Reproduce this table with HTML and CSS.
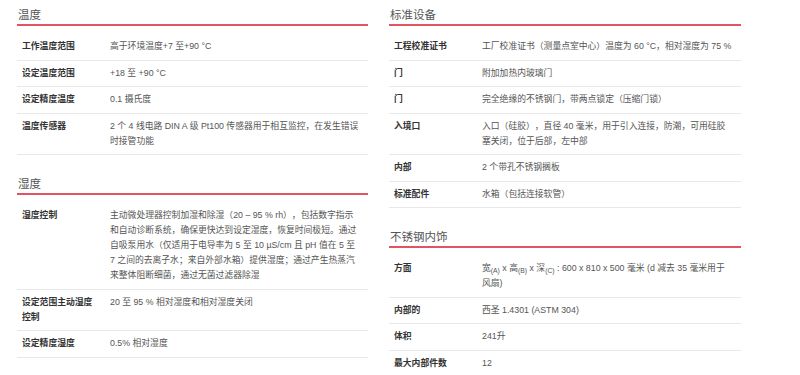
FILE: index.html
```html
<!DOCTYPE html>
<html lang="zh">
<head>
<meta charset="utf-8">
<link rel="stylesheet" href="styles.css">
</head>
<body>
<div class="page">
  <div class="col">
    <section class="spec">
      <h2 class="spec-title">温度</h2>
      <div class="rows">
        <div class="row"><div class="label">工作温度范围</div><div class="value">高于环境温度+7 至+90 °C</div></div>
        <div class="row"><div class="label">设定温度范围</div><div class="value">+18 至 +90 °C</div></div>
        <div class="row"><div class="label">设定精度温度</div><div class="value">0.1 摄氏度</div></div>
        <div class="row"><div class="label">温度传感器</div><div class="value">2 个 4 线电路 DIN A 级 Pt100 传感器用于相互监控，在发生错误<br>时接管功能</div></div>
      </div>
    </section>
    <section class="spec">
      <h2 class="spec-title">湿度</h2>
      <div class="rows">
        <div class="row"><div class="label">湿度控制</div><div class="value">主动微处理器控制加湿和除湿（20 – 95 % rh），包括数字指示<br>和自动诊断系统，确保更快达到设定湿度，恢复时间极短。通过<br>自吸泵用水（仅适用于电导率为 5 至 10 µS/cm 且 pH 值在 5 至<br>7 之间的去离子水；来自外部水箱）提供湿度；通过产生热蒸汽<br>来整体阻断细菌，通过无菌过滤器除湿</div></div>
        <div class="row"><div class="label">设定范围主动湿度控制</div><div class="value">20 至 95 % 相对湿度和相对湿度关闭</div></div>
        <div class="row"><div class="label">设定精度湿度</div><div class="value">0.5% 相对湿度</div></div>
      </div>
    </section>
  </div>
  <div class="col">
    <section class="spec">
      <h2 class="spec-title">标准设备</h2>
      <div class="rows">
        <div class="row"><div class="label">工程校准证书</div><div class="value">工厂校准证书（测量点室中心）温度为 60 °C，相对湿度为 75 %</div></div>
        <div class="row"><div class="label">门</div><div class="value">附加加热内玻璃门</div></div>
        <div class="row"><div class="label">门</div><div class="value">完全绝缘的不锈钢门，带两点锁定（压缩门锁）</div></div>
        <div class="row"><div class="label">入境口</div><div class="value">入口（硅胶），直径 40 毫米，用于引入连接，防潮，可用硅胶<br>塞关闭，位于后部，左中部</div></div>
        <div class="row"><div class="label">内部</div><div class="value">2 个带孔不锈钢搁板</div></div>
        <div class="row"><div class="label">标准配件</div><div class="value">水箱（包括连接软管）</div></div>
      </div>
    </section>
    <section class="spec">
      <h2 class="spec-title">不锈钢内饰</h2>
      <div class="rows">
        <div class="row"><div class="label">方面</div><div class="value">宽<sub>(A)</sub> x 高<sub>(B)</sub> x 深<sub>(C)</sub> : 600 x 810 x 500 毫米 (d 减去 35 毫米用于<br>风扇)</div></div>
        <div class="row"><div class="label">内部的</div><div class="value">西圣 1.4301 (ASTM 304)</div></div>
        <div class="row"><div class="label">体积</div><div class="value">241升</div></div>
        <div class="row"><div class="label">最大内部件数</div><div class="value">12</div></div>
      </div>
    </section>
  </div>
</div>
</body>
</html>
```

FILE: styles.css
```css
* { box-sizing: border-box; }
html, body { margin: 0; padding: 0; background: #fff; }
body {
  font-family: "Liberation Sans", "Noto Sans CJK SC", sans-serif;
  font-size: 8.8px;
  color: #555;
  text-spacing-trim: space-all;
}
.page {
  display: grid;
  grid-template-columns: 351px 352px;
  column-gap: 21px;
  padding: 4px 0 0 17px;
  align-items: start;
}
.spec + .spec { margin-top: 18px; }
.spec-title {
  margin: 0;
  font-family: "Noto Sans CJK SC", sans-serif;
  font-size: 11.5px;
  font-weight: normal;
  line-height: 20px;
  color: #555;
  border-bottom: 2px solid #e35462;
  padding-left: 1px;
}
.rows { margin-top: 8px; }
.row {
  display: grid;
  grid-template-columns: 93px 1fr;
  border-bottom: 1px solid #e8e8e8;
  padding: 5.25px 0;
  line-height: 15px;
}
.label {
  padding: 0 12px 0 5px;
  font-weight: bold;
  color: #333;
}
.value {
  white-space: nowrap;
  color: #555;
}
.value sub {
  font-size: 6.8px;
  vertical-align: -2px;
  line-height: 1;
}
```
